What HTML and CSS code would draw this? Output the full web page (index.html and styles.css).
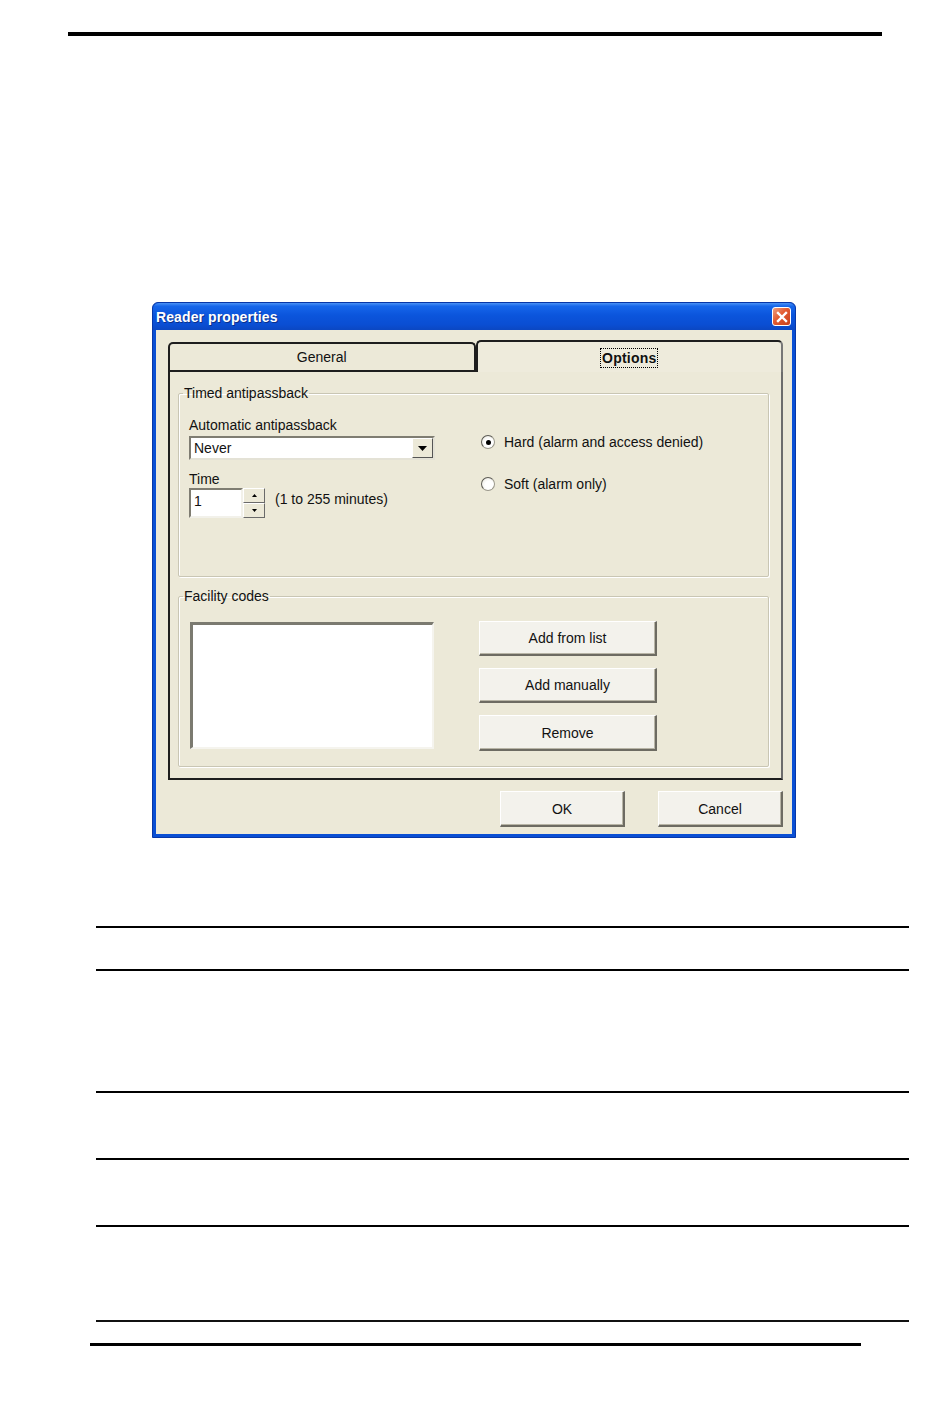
FILE: index.html
```html
<!DOCTYPE html>
<html lang="en">
<head>
  <meta charset="UTF-8">
  <title>Reader properties</title>
  <link rel="stylesheet" href="styles.css">
</head>
<body>
  <div class="page">
    <div class="top-rule"></div>

    <div class="dialog">
      <div class="titlebar">
        <span class="title">Reader properties</span>
        <span class="close-btn">
          <svg width="12" height="12" viewBox="0 0 12 12">
            <path d="M2 2 L10 10 M10 2 L2 10" stroke="#fff" stroke-width="2.4" stroke-linecap="square"/>
          </svg>
        </span>
      </div>

      <div class="dialog-body">
        <div class="tabs">
          <div class="tab">General</div>
          <div class="tab tab-active"><span class="focus">Options</span></div>
        </div>

        <div class="tab-panel">
          <fieldset class="group group-timed">
            <legend>Timed antipassback</legend>
            <div class="group-row">
              <div class="col-left">
                <div class="field-label">Automatic antipassback</div>
                <div class="combo">
                  <span class="combo-value">Never</span>
                  <span class="combo-arrow">
                    <svg width="9" height="5" viewBox="0 0 9 5"><path d="M0 0 H9 L4.5 5 Z" fill="#000"/></svg>
                  </span>
                </div>
                <div class="field-label label-time">Time</div>
                <div class="spin-row">
                  <div class="spin-input">1</div>
                  <div class="spinner">
                    <span class="spin-btn"><svg width="5" height="3" viewBox="0 0 5 3"><path d="M0 3 H5 L2.5 0 Z" fill="#000"/></svg></span>
                    <span class="spin-btn"><svg width="5" height="3" viewBox="0 0 5 3"><path d="M0 0 H5 L2.5 3 Z" fill="#000"/></svg></span>
                  </div>
                  <span class="spin-hint">(1 to 255 minutes)</span>
                </div>
              </div>
              <div class="col-right">
                <label class="radio-row">
                  <span class="radio radio-on"></span>
                  Hard (alarm and access denied)
                </label>
                <label class="radio-row">
                  <span class="radio"></span>
                  Soft (alarm only)
                </label>
              </div>
            </div>
          </fieldset>

          <fieldset class="group group-codes">
            <legend>Facility codes</legend>
            <div class="group-row">
              <div class="listbox"></div>
              <div class="code-buttons">
                <button class="xp-button">Add from list</button>
                <button class="xp-button">Add manually</button>
                <button class="xp-button btn-remove">Remove</button>
              </div>
            </div>
          </fieldset>
        </div>

        <div class="dialog-actions">
          <button class="xp-button btn-action">OK</button>
          <button class="xp-button btn-action">Cancel</button>
        </div>
      </div>
    </div>

    <table class="doc-table">
      <tr class="row-a"><td class="col-key"></td><td></td></tr>
      <tr class="row-b"><td class="col-key"></td><td></td></tr>
      <tr class="row-c"><td class="col-key"></td><td></td></tr>
      <tr class="row-c"><td class="col-key"></td><td></td></tr>
      <tr class="row-d"><td class="col-key"></td><td></td></tr>
    </table>

    <div class="bottom-rule"></div>
  </div>
</body>
</html>
```

FILE: styles.css
```css
:root {
  --face: #ece9d8;
  --button-face: #f3f2ec;
  --shadow: #8e8c80;
  --dark: #1e1e1e;
  --text: #111;
}

* {
  margin: 0;
  padding: 0;
  box-sizing: border-box;
}

body {
  background: #fff;
  font-family: 'Liberation Sans', Arial, sans-serif;
  font-size: 14px;
  color: var(--text);
}

.page {
  padding-top: 32px;
  padding-bottom: 60px;
}

.top-rule {
  margin-left: 68px;
  width: 814px;
  height: 4px;
  background: #000;
}

/* Dialog window */
.dialog {
  width: 644px;
  margin: 266px 0 0 152px;
  background: #0a4fd4;
  border-radius: 6px 6px 0 0;
  padding: 0 3px 3px;
  border: 1px solid #0737a8;
}

.titlebar {
  height: 27px;
  margin: 0 -3px;
  padding: 0 4px 0 3px;
  display: flex;
  align-items: center;
  justify-content: space-between;
  border-radius: 6px 6px 0 0;
  background: linear-gradient(to bottom, #4a92f5 0%, #1666ea 12%, #0b55dc 45%, #0a4ed3 80%, #0b47c2 100%);
}

.title {
  color: #fff;
  font-weight: bold;
  font-size: 14px;
  letter-spacing: 0.1px;
  text-shadow: 1px 1px 0 #0a2f8a;
  padding-top: 1px;
}

.close-btn {
  width: 19px;
  height: 19px;
  display: flex;
  align-items: center;
  justify-content: center;
  border: 1px solid #fff;
  border-radius: 3px;
  background: linear-gradient(135deg, #f0a080 0%, #e25a30 45%, #c8401c 100%);
}

.dialog-body {
  background: var(--face);
  padding: 10px 9px 7px 12px;
}

/* Tabs */
.tabs {
  display: flex;
  align-items: flex-end;
  height: 30px;
}

.tab {
  flex: 1;
  height: 28px;
  display: flex;
  align-items: center;
  justify-content: center;
  background: var(--face);
  border: 2px solid var(--dark);
  border-bottom: none;
  border-radius: 5px 5px 0 0;
}

.tab-active {
  height: 32px;
  margin-bottom: -2px;
  position: relative;
  z-index: 1;
  font-weight: bold;
  background: #eeebdc;
  border-right-color: #777;
  padding-top: 2px;
}

.focus {
  border: 1px dotted #000;
  padding: 1px 1px;
  letter-spacing: 0.2px;
}

.tab-panel {
  background: var(--face);
  border: 2px solid var(--dark);
  border-right-color: #6c6c6c;
  padding: 13px 12px 11px 8px;
}

/* Group boxes */
.group {
  border: 1px solid #c9c6b4;
  box-shadow: 1px 1px 0 #fff, inset 1px 1px 0 #fff;
  border-radius: 2px;
}

.group legend {
  margin-left: -6px;
  padding: 0 1px;
  line-height: 16px;
}

.group-timed {
  padding: 16px 10px 58px 10px;
}

.group-codes {
  margin-top: 11px;
  padding: 17px 10px 15px 11px;
}

.group-codes legend {
  margin-left: -7px;
}

.group-row {
  display: flex;
}

.col-left {
  width: 246px;
}

.field-label {
  line-height: 16px;
}

.combo {
  margin-top: 3px;
  height: 24px;
  display: flex;
  align-items: stretch;
  background: #fff;
  border: 2px solid #7f7d72;
  border-right-color: #e4e2d6;
  border-bottom-color: #e4e2d6;
}

.combo-value {
  flex: 1;
  padding-left: 3px;
  line-height: 20px;
}

.combo-arrow {
  width: 21px;
  display: flex;
  align-items: center;
  justify-content: center;
  background: var(--face);
  border: 1px solid #fff;
  border-right-color: #555;
  border-bottom-color: #555;
}

.label-time {
  margin-top: 11px;
}

.spin-row {
  margin-top: 1px;
  display: flex;
  align-items: flex-start;
}

.spin-input {
  width: 54px;
  height: 30px;
  background: #fff;
  border: 2px solid #7f7d72;
  border-right-color: #f2f1ea;
  border-bottom-color: #f2f1ea;
  padding-left: 3px;
  line-height: 22px;
}

.spinner {
  width: 22px;
  height: 30px;
  display: flex;
  flex-direction: column;
}

.spin-btn {
  flex: 1;
  display: flex;
  align-items: center;
  justify-content: center;
  background: var(--face);
  border: 1px solid #fff;
  border-right-color: #6a6a6a;
  border-bottom-color: #6a6a6a;
}

.spin-hint {
  margin: 3px 0 0 10px;
  line-height: 16px;
}

.col-right {
  margin-left: 46px;
  padding-top: 17px;
  display: flex;
  flex-direction: column;
  gap: 26px;
}

.radio-row {
  display: flex;
  align-items: center;
  gap: 9px;
  line-height: 16px;
}

.radio {
  width: 14px;
  height: 14px;
  border-radius: 50%;
  background: radial-gradient(circle at 60% 60%, #fff 40%, #e6e4da 100%);
  border: 1px solid #9a988c;
  border-top-color: #5c5b55;
  border-left-color: #5c5b55;
  display: flex;
  align-items: center;
  justify-content: center;
}

.radio-on::after {
  content: "";
  width: 5px;
  height: 5px;
  border-radius: 50%;
  background: #000;
}

.listbox {
  width: 244px;
  height: 127px;
  margin-top: 1px;
  background: #fff;
  border: 3px solid #7b7a70;
  border-right: 2px solid #f5f4ee;
  border-bottom: 2px solid #f5f4ee;
}

.code-buttons {
  margin-left: 45px;
  display: flex;
  flex-direction: column;
  gap: 12px;
}

/* Buttons */
.xp-button {
  font-family: inherit;
  font-size: 14px;
  color: var(--text);
  width: 178px;
  height: 35px;
  background: var(--button-face);
  border: 1px solid #fff;
  border-right: 2px solid #6d6b62;
  border-bottom: 2px solid #6d6b62;
  box-shadow: inset -1px -1px 0 #b8b5a6;
}

.btn-remove {
  height: 36px;
}

.dialog-actions {
  margin-top: 11px;
  display: flex;
  justify-content: flex-end;
  gap: 33px;
}

.btn-action {
  width: 125px;
  height: 36px;
}

/* Document table lines */
.doc-table {
  margin: 88px 0 0 96px;
  width: 813px;
  border-collapse: collapse;
}

.doc-table tr {
  border-top: 2px solid #000;
}

.doc-table tr:last-child {
  border-bottom: 2px solid #111;
}

.col-key {
  width: 202px;
}

.row-a { height: 43px; }
.row-b { height: 122px; }
.row-c { height: 67px; }
.row-d { height: 95px; }

.bottom-rule {
  margin: 21px 0 0 90px;
  width: 771px;
  height: 3px;
  background: #000;
}
```
